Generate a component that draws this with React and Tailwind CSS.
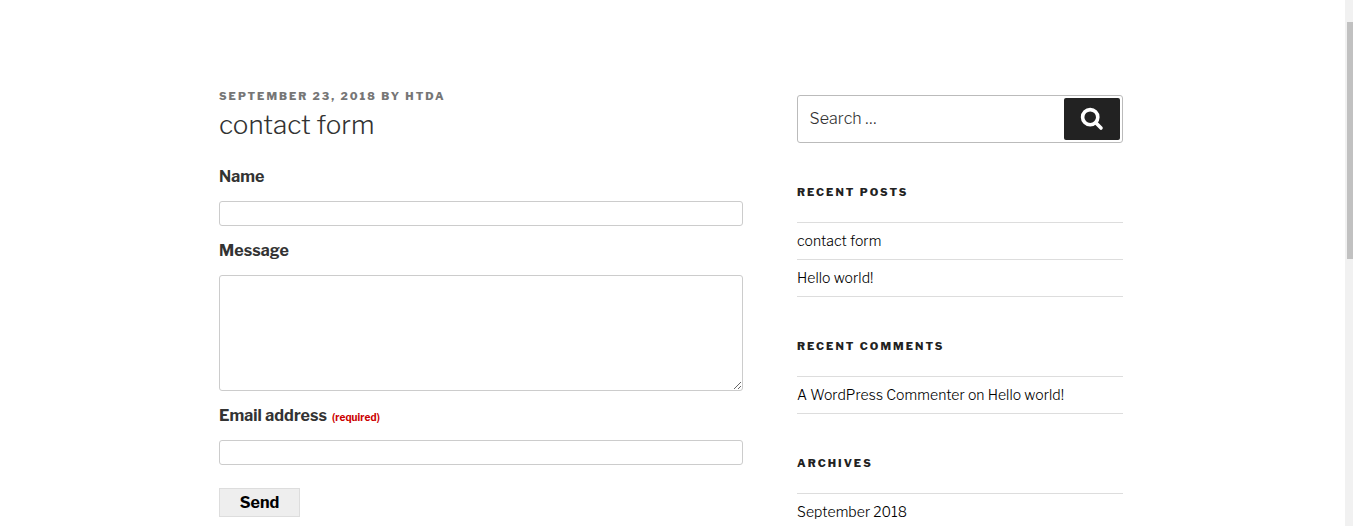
import React from "react";

function Field({ label, required, multiline }) {
  return (
    <div>
      <label className="flex h-[25px] items-center text-[16px] leading-[25px] font-bold tracking-[0.05px] text-[#333]">
        <span>{label}</span>
        {required && (
          <span className="mt-1 ml-[5px] text-[10px] tracking-[0.1px] text-[#c00]">(required)</span>
        )}
      </label>
      {multiline ? (
        <textarea className="mt-3 block h-[116px] w-full resize rounded-[3px] border border-[#ccc] bg-white outline-none" />
      ) : (
        <input className="mt-3 block h-[25px] w-full rounded-[3px] border border-[#ccc] bg-white px-2 outline-none" />
      )}
    </div>
  );
}

function Widget({ title, children }) {
  return (
    <section className="mb-[40px]">
      <h2 className="h-[18px] text-[11px] leading-[18px] font-extrabold tracking-[2.03px] text-[#222]">{title}</h2>
      <ul className="mt-[21px] border-t border-[#ddd]">{children}</ul>
    </section>
  );
}

function Item({ children }) {
  return (
    <li className="h-[37px] border-b border-[#ddd] text-[14px] leading-[36px] font-light tracking-[0.07px] whitespace-nowrap text-black">
      {children}
    </li>
  );
}

export default function App() {
  return (
    <div className="flex h-[526px] w-[1353px] overflow-hidden bg-white font-['Libre_Franklin','Inter','Liberation_Sans',sans-serif]">
      <div className="flex flex-1 gap-[54px] pl-[219px]">
        <main className="w-[524px] pt-[87px]">
          <div className="h-[18px] text-[11px] leading-[18px] font-extrabold tracking-[2px] whitespace-nowrap text-[#767676]">
            SEPTEMBER 23, 2018 BY HTDA
          </div>
          <h1 className="h-[40px] text-[26px] leading-[40px] font-light tracking-[0.04px] text-[#333]">contact form</h1>
          <form className="mt-[19px] flex flex-col gap-3" onSubmit={(e) => e.preventDefault()}>
            <Field label="Name" />
            <Field label="Message" multiline />
            <Field label="Email address" required />
            <button className="mt-[11px] h-[29px] w-[81px] border border-[#ddd] bg-[#eee] text-[16px] leading-[27px] font-bold text-black">
              Send
            </button>
          </form>
        </main>
        <aside className="w-[326px] pt-[95px]">
          <div className="mb-[40px] flex h-[48px] items-center justify-between rounded-[3px] border border-[#bbb] pr-[2px] pl-[11.5px]">
            <span className="text-[16px] leading-[24px] font-light tracking-[0.08px] text-[#333]">Search …</span>
            <button aria-label="Search" className="flex h-[42px] w-[56px] items-center justify-center rounded-[2px] bg-[#222]">
              <svg width="24" height="24" viewBox="0 0 24 24" fill="none" stroke="white">
                <circle cx="10.2" cy="10.2" r="7.6" strokeWidth="3.6" />
                <path d="M15.8 15.8 21 21" strokeWidth="3.6" strokeLinecap="round" />
              </svg>
            </button>
          </div>
          <Widget title="RECENT POSTS">
            <Item>contact form</Item>
            <Item>Hello world!</Item>
          </Widget>
          <Widget title="RECENT COMMENTS">
            <Item>A WordPress Commenter on Hello world!</Item>
          </Widget>
          <Widget title="ARCHIVES">
            <Item>September 2018</Item>
          </Widget>
        </aside>
      </div>
      <div className="w-2 bg-[#f1f1f1] pt-[22px] pl-[2px]">
        <div className="h-[237px] bg-[#c1c1c1]" />
      </div>
    </div>
  );
}
